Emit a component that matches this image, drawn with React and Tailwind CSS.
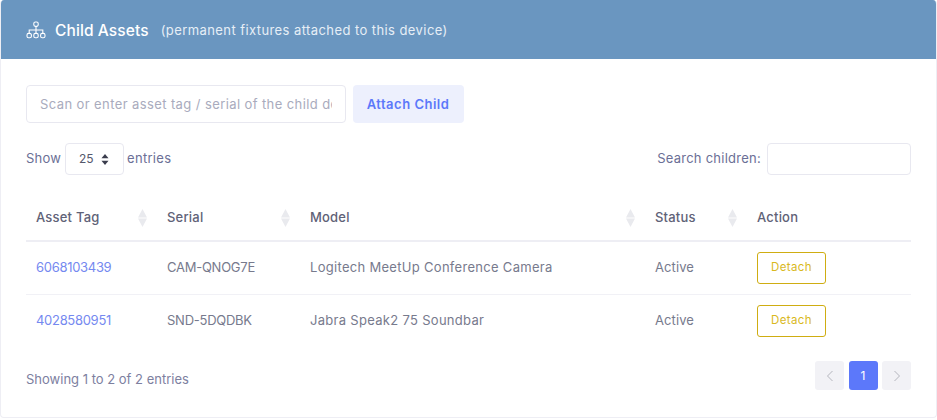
const font = { fontFamily: "Inter, 'Open Sans', sans-serif" };

function SortIcon() {
  return (
    <svg width="9" height="18" viewBox="0 0 9 18" className="shrink-0">
      <path d="M4.5 0L9 8.4H0Z" fill="#e9eaee" />
      <path d="M4.5 18L9 9.6H0Z" fill="#e9eaee" />
    </svg>
  );
}

function Th({ w, children, sort = true }) {
  return (
    <th className={`${w} h-[45px] border-b-2 border-[#eeeef4] pl-[10px] pr-[10.5px] text-left text-[13px] font-medium tracking-[0.2px] text-[#5f6277]`}>
      <div className="flex items-center justify-between">
        <span>{children}</span>
        {sort && <SortIcon />}
      </div>
    </th>
  );
}

function Row({ tag, serial, model, last }) {
  const b = last ? "" : "border-b border-[#f1f1f6]";
  const td = `${b} pl-[10px] pr-[10px] text-[13px] text-[#777a8d]`;
  return (
    <tr className="h-[53px]">
      <td className={`${b} pl-[10px] text-[13px] tracking-[-0.3px] text-[#7589f0]`}>{tag}</td>
      <td className={`${td} tracking-[-0.25px]`}>{serial}</td>
      <td className={`${td} tracking-[0.3px]`}>{model}</td>
      <td className={`${td} tracking-[0.1px]`}>Active</td>
      <td className={td}>
        <button className="flex h-[32px] w-[69px] items-center justify-center rounded-[3px] border border-[#cfad12] bg-white text-[11.5px] tracking-[0.4px] text-[#d9b91e]">
          Detach
        </button>
      </td>
    </tr>
  );
}

export default function App() {
  return (
    <div className="h-[420px] w-[937px] bg-white" style={font}>
      <div className="h-[418px] overflow-hidden rounded-[4px] border-x border-b border-[#eeeef4] bg-white">
        <div className="flex h-[59px] items-center bg-[#6a96c0] pl-[25px] pt-[2px] text-white">
          <svg width="20" height="18" viewBox="0 0 20 18" fill="none" stroke="white" strokeWidth="1.1" className="mb-[2px] mr-[9px]">
            <rect x="7.8" y="1" width="4.4" height="4.4" rx="1.6" />
            <path d="M10 5.4V9M3.2 12.4V9H16.8V12.4M10 9V12.4" />
            <rect x="1" y="12.4" width="4.4" height="4.4" rx="1.6" />
            <rect x="7.8" y="12.4" width="4.4" height="4.4" rx="1.6" />
            <rect x="14.6" y="12.4" width="4.4" height="4.4" rx="1.6" />
          </svg>
          <span className="text-[15.5px] font-medium tracking-[0.1px]">Child Assets</span>
          <span className="ml-[12px] text-[13px] tracking-[0.42px] text-[#e6eef6]">(permanent fixtures attached to this device)</span>
        </div>
        <div className="px-[25px] pt-[26px]">
          <div className="flex gap-[6.5px]">
            <input
              className="h-[38px] w-[320px] rounded-[4px] border border-[#e8e8f0] px-[13px] text-[13px] tracking-[0.4px] outline-none placeholder:text-[#a9abbd]"
              placeholder="Scan or enter asset tag / serial of the child device"
            />
            <button className="h-[38px] w-[111px] rounded-[4px] bg-[#edf0fd] pt-px text-[13px] font-semibold tracking-[0.5px] text-[#5c78fa]">
              Attach Child
            </button>
          </div>
          <div className="mt-[20px] flex items-center justify-between text-[13px] text-[#6b6f96]">
            <div className="flex items-center gap-[3px]">
              <span className="tracking-[0.2px]">Show</span>
              <div className="ml-[1px] flex h-[32px] w-[59px] items-center justify-between rounded-[4px] border border-[#e8e8f0] pl-[13px] pr-[14px] text-[12px] text-[#55586c]">
                <span>25</span>
                <svg width="8" height="11" viewBox="0 0 8 11" fill="#3a3d4d">
                  <path d="M4 0L7.5 4.2H0.5Z" />
                  <path d="M4 11L7.5 6.8H0.5Z" />
                </svg>
              </div>
              <span className="tracking-[0.3px]">entries</span>
            </div>
            <div className="flex items-center gap-[6px]">
              <span className="tracking-[0.25px]">Search children:</span>
              <input className="h-[32px] w-[144px] rounded-[4px] border border-[#e8e8f0] outline-none" />
            </div>
          </div>
          <table className="mt-[21px] w-[885px] table-fixed border-collapse">
            <thead>
              <tr>
                <Th w="w-[131px]">Asset Tag</Th>
                <Th w="w-[143px]">Serial</Th>
                <Th w="w-[345px]">Model</Th>
                <Th w="w-[102px]">Status</Th>
                <Th w="w-[164px]" sort={false}>Action</Th>
              </tr>
            </thead>
            <tbody>
              <Row tag="6068103439" serial="CAM-QNOG7E" model="Logitech MeetUp Conference Camera" />
              <Row tag="4028580951" serial="SND-5DQDBK" model="Jabra Speak2 75 Soundbar" last />
            </tbody>
          </table>
          <div className="mt-[14px] flex items-start justify-between">
            <span className="pt-[9px] text-[13px] text-[#7d809f]">Showing 1 to 2 of 2 entries</span>
            <div className="flex gap-[4.5px]">
              <div className="flex size-[29px] items-center justify-center rounded-[3px] bg-[#f2f2f6]">
                <svg width="8" height="12" viewBox="0 0 8 12" fill="none" stroke="#b4b5bd" strokeWidth="1"><path d="M6.5 1L1.5 6L6.5 11" /></svg>
              </div>
              <div className="flex size-[29px] items-center justify-center rounded-[3px] bg-[#5c78fa] text-[12px] text-white">1</div>
              <div className="flex size-[29px] items-center justify-center rounded-[3px] bg-[#f2f2f6]">
                <svg width="8" height="12" viewBox="0 0 8 12" fill="none" stroke="#b4b5bd" strokeWidth="1"><path d="M1.5 1L6.5 6L1.5 11" /></svg>
              </div>
            </div>
          </div>
        </div>
      </div>
    </div>
  );
}
